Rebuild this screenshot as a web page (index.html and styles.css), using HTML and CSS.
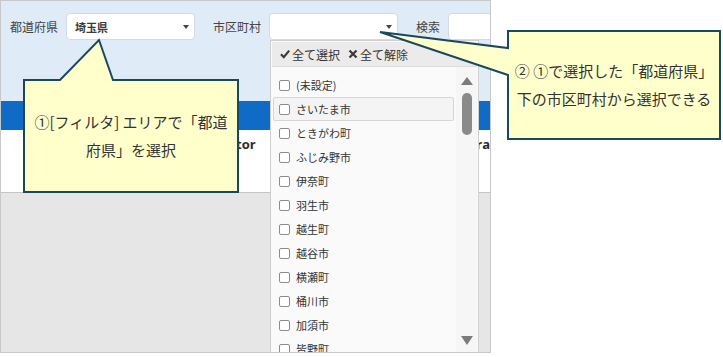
FILE: index.html
```html
<!DOCTYPE html>
<html lang="ja">
<head>
    <meta charset="UTF-8">
    <title>市区町村フィルタ</title>
    <link rel="stylesheet" href="styles.css">
</head>
<body>
<div class="page">
    <!--画面キャプチャ部分-->
    <div class="screen">
        <div class="filter">
            <span class="label">都道府県</span>
            <div class="select"><span>埼玉県</span><em class="caret"></em></div>
            <span class="label gap">市区町村</span>
            <div class="select"><span></span><em class="caret"></em></div>
            <span class="label gap">検索</span>
            <div class="search"></div>
        </div>
        <div class="bar"></div>
        <div class="table">
            <div class="th op">Operator</div>
            <div class="th">Extra</div>
        </div>
        <div class="rest"></div>

        <!--市区町村のドロップダウン-->
        <div class="drop">
            <div class="dropHead">
                <span class="act">
                    <svg class="ico" width="10" height="10" viewBox="0 0 10 10"><path d="M1 5.2 L3.8 8.2 L9.2 1.6"/></svg>全て選択
                </span>
                <span class="act">
                    <svg class="ico" width="10" height="10" viewBox="0 0 10 10"><path d="M1.5 1.5 L8.5 8.5 M8.5 1.5 L1.5 8.5"/></svg>全て解除
                </span>
            </div>
            <div class="dropBody">
                <ul class="list">
                    <li><em></em><span>(未設定)</span></li>
                    <li class="hover"><em></em><span>さいたま市</span></li>
                    <li><em></em><span>ときがわ町</span></li>
                    <li><em></em><span>ふじみ野市</span></li>
                    <li><em></em><span>伊奈町</span></li>
                    <li><em></em><span>羽生市</span></li>
                    <li><em></em><span>越生町</span></li>
                    <li><em></em><span>越谷市</span></li>
                    <li><em></em><span>横瀬町</span></li>
                    <li><em></em><span>桶川市</span></li>
                    <li><em></em><span>加須市</span></li>
                    <li><em></em><span>皆野町</span></li>
                </ul>
                <div class="scroll">
                    <em class="up"></em>
                    <em class="thumb"></em>
                    <em class="down"></em>
                </div>
            </div>
        </div>
    </div>

    <!--吹き出し-->
    <svg class="callouts" width="723" height="357" viewBox="0 0 723 357">
        <polygon points="24,80 60,80 99,40 113,80 238,80 238,192 24,192"/>
        <polygon points="508,31 720,31 720,139 508,139 508,75 380,32 508,48"/>
    </svg>
    <div class="note noteOne">①[フィルタ] エリアで「都道<br>府県」を選択</div>
    <div class="note noteTwo">② ①で選択した「都道府県」<br>下の市区町村から選択できる</div>
</div>
</body>
</html>
```

FILE: styles.css
```css
* {
    margin: 0;
    padding: 0;
    box-sizing: border-box;
}
body {
    background: #fff;
    font-family: "Noto Sans CJK JP", sans-serif;
    color: #333;
}
ul, li {
    list-style: none;
}
.page {
    position: relative;
    width: 723px;
    height: 357px;
}
.screen {
    position: relative;
    display: flex;
    flex-direction: column;
    width: 491px;
    height: 353px;
    border: 1px solid #c8c8c8;
    overflow: hidden;
}

/*フィルタエリア*/
.filter {
    display: flex;
    align-items: flex-start;
    height: 100px;
    padding: 12px 0 0 9px;
    background: #e0ebf8;
}
.label {
    height: 27px;
    line-height: 27px;
    font-size: 12px;
    color: #444;
    white-space: nowrap;
}
.label.gap {
    margin-left: 18px;
}
.select, .search {
    display: flex;
    align-items: center;
    flex: none;
    width: 129px;
    height: 27px;
    margin-left: 8px;
    padding-left: 8px;
    background: #fff;
    border: 1px solid #d3dae4;
    border-radius: 4px;
}
.search {
    width: 80px;
}
.select span {
    flex: 1;
    font-size: 11px;
    font-weight: bold;
    color: #3a3a3a;
}
.caret {
    width: 0;
    height: 0;
    margin-right: 5px;
    border-left: 3.5px solid transparent;
    border-right: 3.5px solid transparent;
    border-top: 4px solid #444;
}
.bar {
    height: 29px;
    background: #0f6bc5;
}
.table {
    display: flex;
    height: 63px;
    padding: 5px 0 0 195px;
    background: #fff;
    border-bottom: 1px solid #c4c4c4;
}
.th {
    font-family: "Open Sans", sans-serif;
    font-size: 13px;
    font-weight: bold;
    line-height: 18px;
    color: #2b2b2b;
    white-space: nowrap;
}
.th.op {
    width: 272px;
}
.rest {
    flex: 1;
    background: #e6e6e6;
}

/*ドロップダウン*/
.drop {
    position: absolute;
    left: 269px;
    top: 39px;
    width: 209px;
    height: 330px;
    padding: 1px;
    background: #fafafa;
    border: 1px solid #cfcfcf;
}
.dropHead {
    display: flex;
    align-items: center;
    gap: 8px;
    height: 25px;
    padding-left: 8px;
    background: #ebebeb;
    border-bottom: 1px solid #dcdcdc;
    font-size: 12px;
    color: #333;
}
.act {
    display: flex;
    align-items: center;
}
.ico {
    margin-right: 2px;
}
.ico path {
    fill: none;
    stroke: #3a3a3a;
    stroke-width: 2.2;
}
.dropBody {
    display: flex;
    height: 286px;
}
.list {
    flex: 1;
    padding-top: 6px;
}
.list li {
    display: flex;
    align-items: center;
    width: 181px;
    height: 24px;
    margin-left: 1px;
    padding-left: 5px;
    border: 1px solid transparent;
    border-radius: 2px;
    font-size: 11px;
    color: #333;
}
.list li.hover {
    background: #f4f4f4;
    border-color: #d6d6d6;
}
.list li em {
    width: 11px;
    height: 11px;
    margin-right: 6px;
    background: #fff;
    border: 1px solid #8c8c8c;
    border-radius: 2px;
}
.scroll {
    display: flex;
    flex-direction: column;
    align-items: center;
    width: 21px;
    padding: 10px 0 8px;
    background: #f6f6f6;
}
.up, .down {
    width: 0;
    height: 0;
    border-left: 6.5px solid transparent;
    border-right: 6.5px solid transparent;
}
.up {
    border-bottom: 8px solid #7b7b7b;
}
.down {
    margin-top: auto;
    border-top: 9px solid #7b7b7b;
}
.thumb {
    width: 10px;
    height: 42px;
    margin-top: 8px;
    background: #8a8a8a;
    border-radius: 5px;
}

/*吹き出し*/
.callouts {
    position: absolute;
    left: 0;
    top: 0;
}
.callouts polygon {
    fill: #ffffcc;
    stroke: #1a495e;
    stroke-width: 2;
    stroke-linejoin: miter;
}
.note {
    position: absolute;
    display: flex;
    align-items: center;
    justify-content: center;
    text-align: center;
    font-size: 15px;
    line-height: 28px;
    color: #333;
    white-space: nowrap;
}
.noteOne {
    left: 24px;
    top: 80px;
    width: 214px;
    height: 112px;
}
.noteTwo {
    left: 508px;
    top: 31px;
    width: 212px;
    height: 108px;
}
```
